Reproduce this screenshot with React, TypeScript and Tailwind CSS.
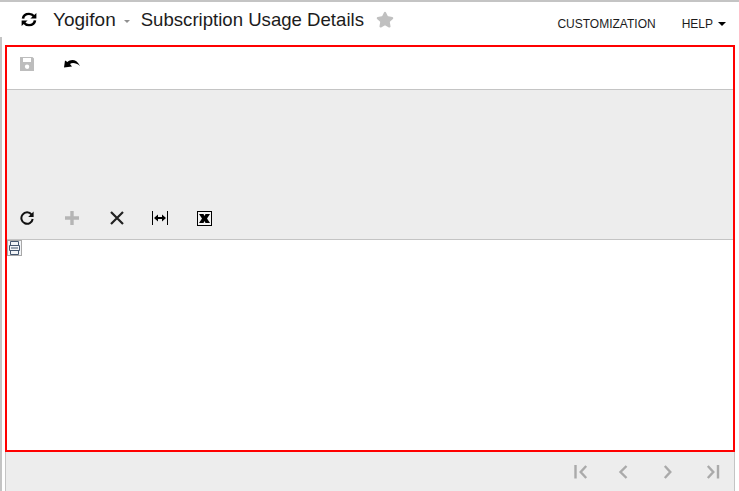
import React from 'react';
import { Star } from 'lucide-react';

function NavArrow({ d, bar }: { d: string; bar?: number }) {
  return (
    <svg width="16" height="16" viewBox="0 0 16 16" fill="none" stroke="#aaaaaa" strokeWidth="2.4">
      <path d={d} />
      {bar !== undefined && <path d={`M${bar} 1V14.5`} />}
    </svg>
  );
}

export default function App() {
  return (
    <div className="w-[739px] h-[491px] bg-white flex flex-col overflow-hidden font-['Liberation_Sans',Arial,sans-serif]">
      {/* top bar */}
      <header className="h-[37px] shrink-0 border-t-2 border-[#c4c4c4] flex items-center pl-[21px] pr-[13px] text-[#1c1c1c]">
        <svg width="16" height="15" viewBox="0 0 16 16" preserveAspectRatio="none" fill="none" stroke="#000" strokeWidth="2.6" className="mr-[16px]">
          <path d="M2 7C2.4 3.8 5 2 8 2C10.2 2 11.8 3 13 4.6" />
          <path d="M14 9C13.6 12.2 11 14 8 14C5.8 14 4.2 13 3 11.4" />
          <path d="M15.4 1V7H9.4Z" fill="#000" stroke="none" />
          <path d="M0.6 15V9H6.6Z" fill="#000" stroke="none" />
        </svg>
        <span className="text-[19px] leading-[24px]">Yogifon</span>
        <span className="ml-[8px] mr-[11px] mt-[3px] w-0 h-0 border-x-[3.5px] border-x-transparent border-t-[3px] border-t-[#909090]" />
        <span className="text-[18.6px] leading-[24px]">Subscription Usage Details</span>
        <Star size={18} fill="#c0c0c0" stroke="#c0c0c0" className="ml-[12px]" />
        <span className="ml-auto mt-[9px] text-[12px]">CUSTOMIZATION</span>
        <span className="ml-[26px] mt-[9px] text-[12px]">HELP</span>
        <span className="ml-[5px] mt-[9px] w-0 h-0 border-x-[4px] border-x-transparent border-t-[4px] border-t-[#000]" />
      </header>

      {/* page body */}
      <div className="flex-1 flex flex-col border-l-2 border-[#c4c4c4] pl-[3px] pr-[4px] pt-[8px] min-h-0">
        <main className="h-[407px] shrink-0 border-2 border-[#ff0000] flex flex-col">
          {/* form toolbar */}
          <div className="h-[43px] shrink-0 border-b border-[#c4c4c4] flex items-start pl-[13px]">
            <svg width="14" height="14" viewBox="0 0 14 14" className="mt-[10px]">
              <path fillRule="evenodd" fill="#bdbdbd" d="M0 0H12.5L14 1.5V14H0ZM3 1V5H11V1ZM7 7.5A2.2 2.2 0 1 0 7.1 11.9A2.2 2.2 0 1 0 7 7.5Z" />
            </svg>
            <svg width="16" height="9" viewBox="0 0 16 9" className="ml-[30px] mt-[12px]">
              <path d="M0 8.5L1 1.5L3.5 3C7 0 12.5 0 16 7C12 3.5 8 3.5 6 5L8 7.5Z" fill="#000" />
            </svg>
          </div>

          {/* grey filter area with grid toolbar */}
          <div className="h-[150px] shrink-0 bg-[#ededed] border-b border-[#c4c4c4] flex items-end pb-[12px]">
            <div className="flex items-center pl-[13px] h-[18px]">
              <svg width="14" height="14" viewBox="0 0 14 14" fill="none" stroke="#111" strokeWidth="2">
                <path d="M11.6 3.6A5.7 5.7 0 1 0 12.7 8" />
                <path d="M13.6 0.6V6H8.2Z" fill="#111" stroke="none" />
              </svg>
              <svg width="14" height="14" viewBox="0 0 14 14" stroke="#b5b5b5" strokeWidth="3.4" className="ml-[31px]">
                <path d="M7 0V14M0 7H14" />
              </svg>
              <svg width="14" height="14" viewBox="0 0 14 14" stroke="#222" strokeWidth="2.2" className="ml-[31px]">
                <path d="M1 1L13 13M13 1L1 13" />
              </svg>
              <svg width="16" height="14" viewBox="0 0 16 14" fill="none" stroke="#000" className="ml-[28px]">
                <path d="M0.5 0V14M15.5 0V14" />
                <path d="M3.5 7H12.5" strokeWidth="2" />
                <path d="M2 7L6 3.6V10.4ZM14 7L10 3.6V10.4Z" fill="#000" stroke="none" />
              </svg>
              <svg width="15" height="15" viewBox="0 0 15 15" className="ml-[29px]">
                <rect x="0.5" y="0.5" width="14" height="14" fill="#f4f4f4" stroke="#000" />
                <path d="M2 3H6.5L7.5 5L8.5 3H13L10 7.5L13 12H8.5L7.5 10L6.5 12H2L5 7.5Z" fill="#000" />
              </svg>
            </div>
          </div>

          {/* empty grid */}
          <div className="flex-1 bg-white min-h-0">
            <div className="w-[15px] h-[16px] bg-[#f2f4f7] border border-[#a8a8a8] flex items-center justify-center">
              <svg width="11" height="14" viewBox="0 0 11 14" fill="none" stroke="#45566f">
                <path d="M1.5 0.5H9.5V4.5H1.5ZM0.5 4.5H10.5V9.5H0.5ZM1.5 9.5H9.5V13.5H1.5Z" />
                <path d="M2 7H9" />
              </svg>
            </div>
          </div>
        </main>

        {/* pager */}
        <footer className="flex-1 bg-[#ededed] border-x border-[#c4c4c4] flex items-start justify-end pt-[12px] pr-[13px] gap-[28px]">
          <NavArrow d="M13.2 2L7.7 8L13.2 14" bar={2.5} />
          <NavArrow d="M9.5 2L3.5 8L9.5 14" />
          <NavArrow d="M3.8 2L9.3 8L3.8 14" />
          <NavArrow d="M2.8 2L8.3 8L2.8 14" bar={13} />
        </footer>
      </div>
    </div>
  );
}
